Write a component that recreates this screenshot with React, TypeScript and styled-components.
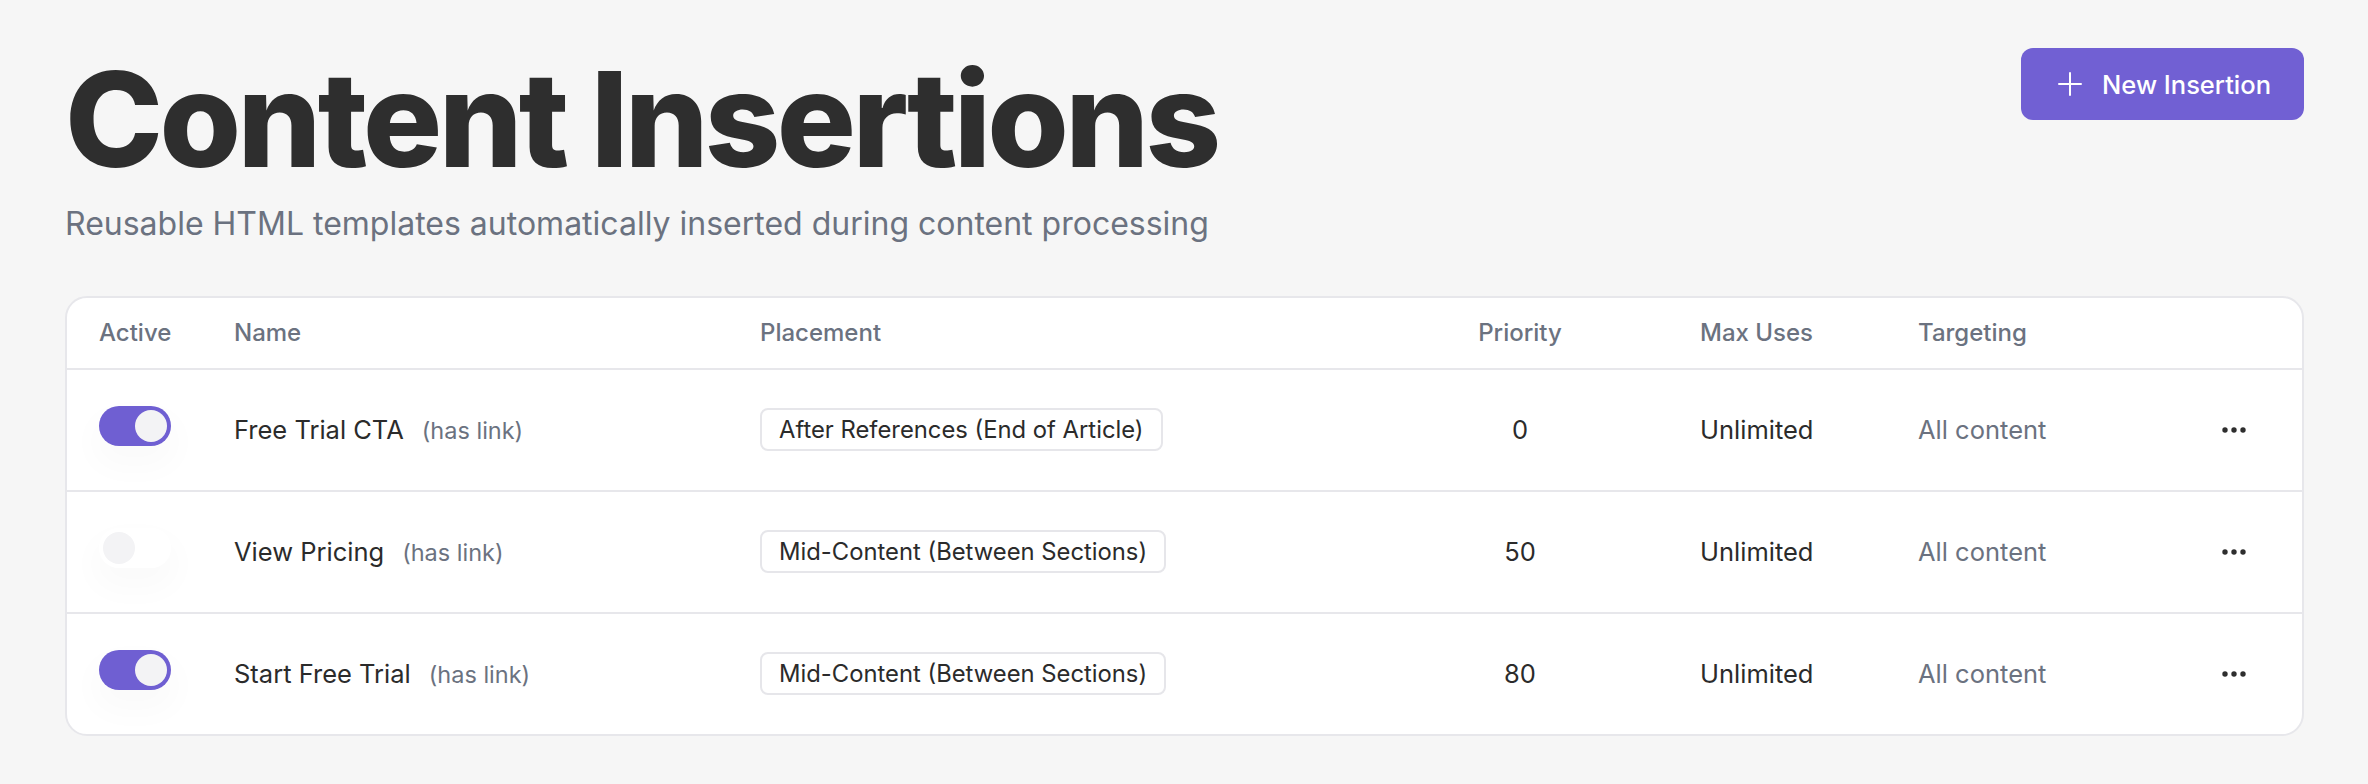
import React from "react";
import styled, { createGlobalStyle } from "styled-components";

const GlobalStyle = createGlobalStyle`
  html, body { margin: 0; padding: 0; background: #f6f6f6; }
  body {
    font-family: Inter, "Noto Sans", "Liberation Sans", sans-serif;
    color: #2b2b2b;
    -webkit-font-smoothing: antialiased;
  }
  * { box-sizing: border-box; }
`;

const Page = styled.main`
  padding: 48px 64px 48px 65px;
`;

const TopBar = styled.header`
  display: flex;
  justify-content: space-between;
  align-items: flex-start;
`;

const TitleBlock = styled.div`
  display: flex;
  flex-direction: column;
`;

const Title = styled.h1`
  margin: 0;
  font-size: 132px;
  font-weight: 800;
  letter-spacing: -0.028em;
  line-height: 1.08;
  color: #2e2e2e;
`;

const Subtitle = styled.p`
  margin: 10px 0 0;
  font-size: 32px;
  line-height: 46px;
  color: #6b7280;
`;

const PrimaryButton = styled.button`
  display: inline-flex;
  align-items: center;
  gap: 20px;
  height: 72px;
  padding: 0 33px 0 37px;
  border: none;
  border-radius: 12px;
  background: #7160d3;
  color: #ffffff;
  font-family: inherit;
  font-size: 25.5px;
  font-weight: 500;
  cursor: pointer;
`;

const Card = styled.section`
  margin-top: 49px;
  background: #ffffff;
  border: 2px solid #e7e7eb;
  border-radius: 22px;
  overflow: hidden;
`;

const columns = "135px 526px 580px 360px 218px 262px 108px";

const HeadRow = styled.div`
  display: grid;
  grid-template-columns: ${columns};
  align-items: center;
  height: 72px;
  padding: 0 14px 0 32px;
  border-bottom: 2px solid #e7e7eb;
`;

const HeadCell = styled.div<{ $align?: string }>`
  font-size: 24px;
  font-weight: 500;
  color: #6b7280;
  text-align: ${(p) => p.$align || "left"};
`;

const BodyRow = styled.div`
  display: grid;
  grid-template-columns: ${columns};
  align-items: center;
  height: 122px;
  padding: 0 14px 0 32px;
  border-bottom: 2px solid #e7e7eb;
  &:last-child {
    border-bottom: none;
    height: 120px;
  }
`;

const Cell = styled.div<{ $align?: string; $muted?: boolean }>`
  display: flex;
  align-items: center;
  justify-content: ${(p) =>
    p.$align === "center" ? "center" : "flex-start"};
  font-size: 25.5px;
  color: ${(p) => (p.$muted ? "#6b7280" : "#2b2b2b")};
`;

const Track = styled.button<{ $on: boolean }>`
  position: relative;
  width: 72px;
  height: 40px;
  margin-top: -8px;
  padding: 0;
  border: none;
  border-radius: 20px;
  background: ${(p) => (p.$on ? "#6f5fd2" : "transparent")};
  box-shadow: 0 16px 30px 8px rgba(0, 0, 0, 0.018);
  cursor: pointer;
`;

const Thumb = styled.span<{ $on: boolean }>`
  position: absolute;
  top: 4px;
  left: ${(p) => (p.$on ? "36px" : "4px")};
  width: 32px;
  height: 32px;
  border-radius: 50%;
  background: #f3f3f5;
`;

const NameWrap = styled.div`
  display: flex;
  align-items: baseline;
  gap: 18px;
`;

const Name = styled.span`
  font-size: 25.5px;
  color: #2b2b2b;
`;

const LinkNote = styled.span`
  font-size: 23.5px;
  color: #6b7280;
`;

const Badge = styled.span`
  display: inline-flex;
  align-items: center;
  height: 43px;
  padding: 0 17px;
  border: 2px solid #e6e6ea;
  border-radius: 8px;
  font-size: 23.8px;
  color: #2b2b2b;
`;

const DotsButton = styled.button`
  display: inline-flex;
  align-items: center;
  justify-content: center;
  width: 48px;
  height: 40px;
  padding: 0;
  border: none;
  background: transparent;
  cursor: pointer;
`;

function Toggle({ on }: { on: boolean }) {
  return (
    <Track $on={on} aria-pressed={on}>
      <Thumb $on={on} />
    </Track>
  );
}

function Dots() {
  return (
    <svg width="30" height="10" viewBox="0 0 30 10" aria-hidden>
      <circle cx="6" cy="5" r="2.7" fill="#2e2e2e" />
      <circle cx="15" cy="5" r="2.7" fill="#2e2e2e" />
      <circle cx="24" cy="5" r="2.7" fill="#2e2e2e" />
    </svg>
  );
}

function PlusIcon() {
  return (
    <svg width="24" height="24" viewBox="0 0 24 24" aria-hidden>
      <path d="M12 1v22M1 12h22" stroke="#ffffff" strokeWidth="2" strokeLinecap="round" fill="none" />
    </svg>
  );
}

const rows = [
  { on: true, name: "Free Trial CTA", placement: "After References (End of Article)", priority: 0 },
  { on: false, name: "View Pricing", placement: "Mid-Content (Between Sections)", priority: 50 },
  { on: true, name: "Start Free Trial", placement: "Mid-Content (Between Sections)", priority: 80 },
];

export default function App() {
  return (
    <>
      <GlobalStyle />
      <Page>
        <TopBar>
          <TitleBlock>
            <Title>Content Insertions</Title>
            <Subtitle>Reusable HTML templates automatically inserted during content processing</Subtitle>
          </TitleBlock>
          <PrimaryButton>
            <PlusIcon />
            New Insertion
          </PrimaryButton>
        </TopBar>

        <Card>
          <HeadRow>
            <HeadCell>Active</HeadCell>
            <HeadCell>Name</HeadCell>
            <HeadCell>Placement</HeadCell>
            <HeadCell $align="center">Priority</HeadCell>
            <HeadCell>Max Uses</HeadCell>
            <HeadCell>Targeting</HeadCell>
            <HeadCell />
          </HeadRow>
          {rows.map((r) => (
            <BodyRow key={r.name}>
              <Cell>
                <Toggle on={r.on} />
              </Cell>
              <Cell>
                <NameWrap>
                  <Name>{r.name}</Name>
                  <LinkNote>(has link)</LinkNote>
                </NameWrap>
              </Cell>
              <Cell>
                <Badge>{r.placement}</Badge>
              </Cell>
              <Cell $align="center">{r.priority}</Cell>
              <Cell>Unlimited</Cell>
              <Cell $muted>All content</Cell>
              <Cell $align="center">
                <DotsButton aria-label="More actions">
                  <Dots />
                </DotsButton>
              </Cell>
            </BodyRow>
          ))}
        </Card>
      </Page>
    </>
  );
}
